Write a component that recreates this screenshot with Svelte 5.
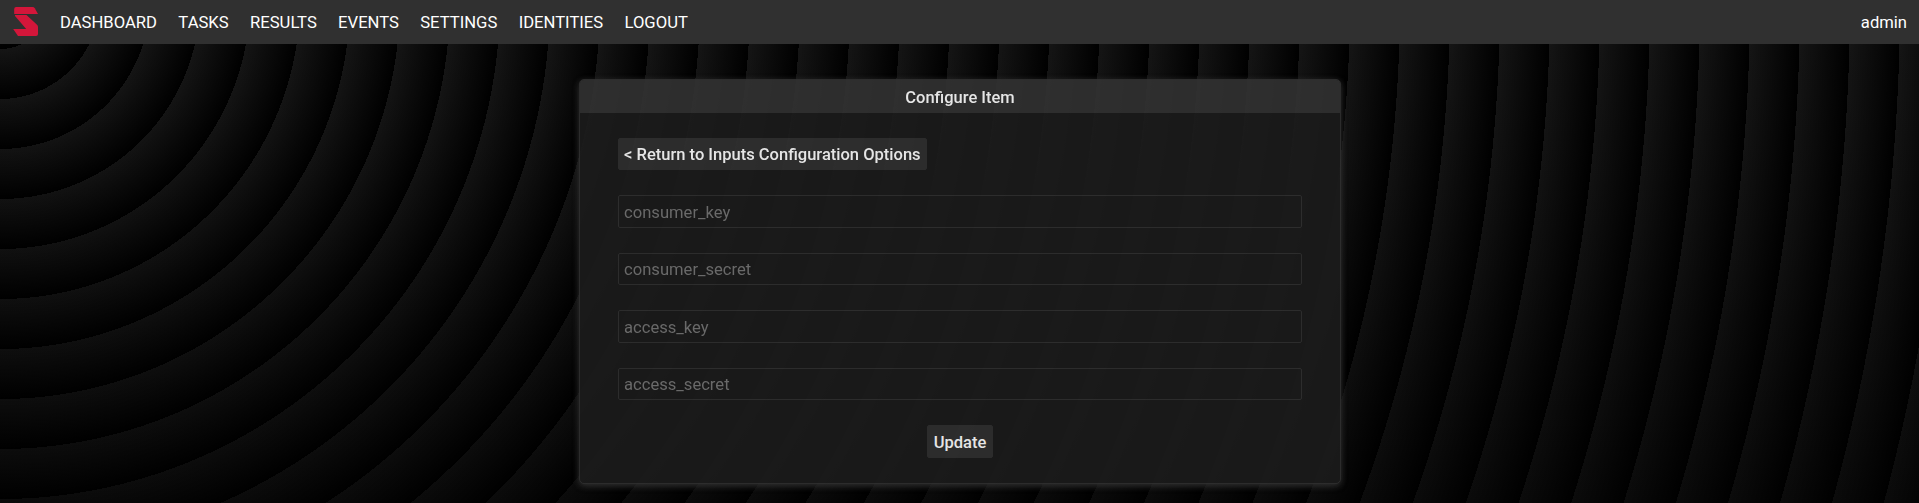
<script>
  const links = ['DASHBOARD', 'TASKS', 'RESULTS', 'EVENTS', 'SETTINGS', 'IDENTITIES', 'LOGOUT'];
  const fields = ['consumer_key', 'consumer_secret', 'access_key', 'access_secret'];
</script>

<div class="page">
  <nav>
    <svg class="logo" width="26" height="30" viewBox="0 0 26 30" aria-hidden="true">
      <path d="M3.2 0H19.5Q21 0 21.8 1.2L25 7H1.2V2Q1.2 0 3.2 0Z" />
      <path d="M2 8H13.5L24 17.8Q25 18.8 25 20V27Q25 29 23 29H5L.2 22H13.2L2 9Z" />
    </svg>
    <div class="links">
      {#each links as link}<a href="#{link.toLowerCase()}">{link}</a>{/each}
    </div>
    <span class="user">admin</span>
  </nav>
  <main>
    <section class="card">
      <h1>Configure Item</h1>
      <form onsubmit={(e) => e.preventDefault()}>
        <button class="back" type="button">&lt; Return to Inputs Configuration Options</button>
        {#each fields as field}<input type="text" placeholder={field} />{/each}
        <button class="update">Update</button>
      </form>
    </section>
  </main>
</div>

<style>
  :global(body) { margin: 0; background: #000; overflow: hidden; }
  .page {
    box-sizing: border-box;
    height: 503px;
    font: 500 16.6px/20px Roboto, sans-serif;
    color: #fff;
    background-image:
      repeating-radial-gradient(circle at 0 -1px, transparent 0, #000 50px),
      linear-gradient(#161616, #0b0b0b);
  }
  nav {
    box-sizing: border-box;
    display: flex;
    align-items: center;
    height: 44px;
    padding: 0 12px 0 13px;
    background: #303030;
  }
  .logo { fill: #d3163a; }
  .links { display: flex; gap: 21.3px; margin-left: 21px; font-size: 16.65px; }
  a { color: inherit; text-decoration: none; font-weight: 400; }
  .links, .user { padding-top: 1px; }
  .user { margin-left: auto; font-weight: 400; }
  main { display: flex; justify-content: center; padding: 35px 0 0 1px; }
  .card {
    box-sizing: border-box;
    width: 762px;
    height: 405px;
    border: 1px solid #323232;
    border-radius: 5px;
    background: #1c1c1c;
    box-shadow: 0 2px 7px #383838;
    opacity: .9;
    overflow: hidden;
  }
  h1 { margin: 0; height: 33px; font: 500 16.5px/35px Roboto, sans-serif; text-align: center; background: #333; }
  form { display: flex; flex-direction: column; padding: 25px 38px; }
  button, input {
    box-sizing: border-box;
    height: 32.45px;
    border: 1px solid #323232;
    border-radius: 2px;
    padding: 1px 5px 0;
    color: #fff;
    font: 500 16.52px/20px Roboto, sans-serif;
  }
  button { background: #323232; }
  .back { align-self: flex-start; }
  input { margin-top: 25px; background: transparent; font-weight: 400; font-size: 16.6px; }
  input::placeholder { color: #757575; opacity: 1; }
  .update { align-self: center; width: 66px; height: 33px; margin-top: 25px; padding: 2px 0 0; }
</style>
